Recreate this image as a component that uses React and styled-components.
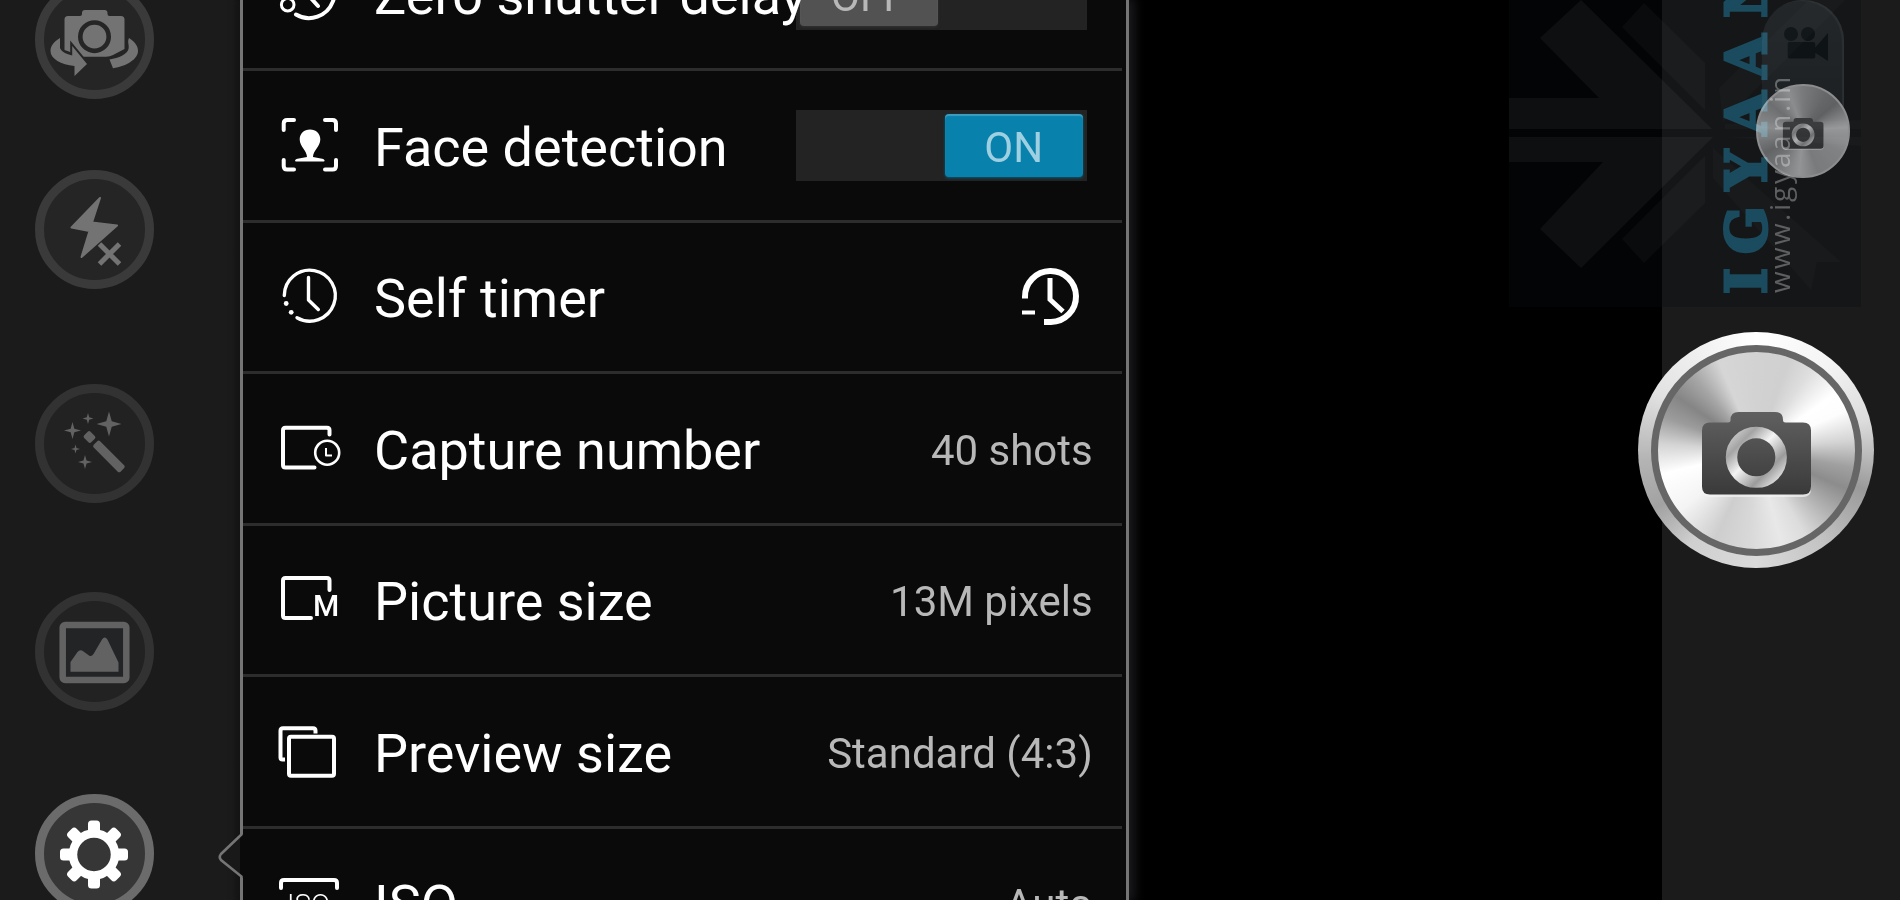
import { useState } from 'react';
import styled, { createGlobalStyle } from 'styled-components';

const GlobalStyle = createGlobalStyle`
  * {
    box-sizing: border-box;
  }
  body {
    margin: 0;
    background: #000;
    overflow: hidden;
    font-family: Roboto, 'Liberation Sans', sans-serif;
  }
  button {
    border: 0;
    padding: 0;
    background: none;
    color: inherit;
    font: inherit;
    cursor: pointer;
  }
`;

const Screen = styled.main`
  position: relative;
  display: grid;
  grid-template-columns: 240px minmax(0, 5fr) minmax(0, 3fr) 238px;
  grid-template-rows: 100vh;
  overflow: hidden;
  color: #fff;
`;

// left side

const Sidebar = styled.nav`
  display: grid;
  grid-template-rows: 190px 214px 208px 202px 119px;
  justify-items: start;
  margin-top: -20px;
  padding-left: 35px;
  background: linear-gradient(to right, #1b1b1b 232px, #121212 240px);
`;

const tones = {
  normal: { ring: '#3a3a3a', fill: '#252525', ink: '#737373' },
  dim: { ring: '#323232', fill: '#222', ink: '#626262' },
  active: { ring: '#6b6b6b', fill: '#363636', ink: '#fff' },
};

const RoundButton = styled.button`
  width: 119px;
  height: 119px;
  border-radius: 50%;
  border: 9px solid ${({ $tone }) => tones[$tone].ring};
  background: ${({ $tone }) => tones[$tone].fill};
  color: ${({ $tone }) => tones[$tone].ink};

  svg {
    display: block;
    width: 119px;
    height: 119px;
    margin: -9px;
  }
`;

// settings panel

const Panel = styled.section`
  position: relative;
  min-width: 0;
  background: #0a0a0a;
  border-left: 3px solid #757575;
  border-right: 3px solid #757575;
  box-shadow: 4px 0 10px 2px #1a1a1e;
`;

const Notch = styled.svg`
  position: absolute;
  top: 832px;
  left: -25px;
  width: 28px;
  height: 48px;
`;

const List = styled.ul`
  display: grid;
  grid-auto-rows: 151px 152px;
  list-style: none;
  margin: -80px 4px 0 0;
  padding: 0;
`;

const Item = styled.li`
  display: grid;
  border-bottom: 3px solid #2d2d2d;
`;

const Row = styled.label`
  display: flex;
  align-items: center;
  min-width: 0;
  padding: 0 29px 0 35px;
  text-align: left;
  cursor: pointer;
`;

const RowIcon = styled.svg`
  flex: none;
  width: 64px;
  height: 64px;
  margin-right: 32px;
  overflow: visible;
  fill: none;
  stroke: #fff;
  stroke-width: 4;
  stroke-linecap: round;
  stroke-linejoin: round;

  .solid,
  text {
    fill: #fff;
    stroke: none;
  }
`;

const Label = styled.span`
  position: relative;
  z-index: 1;
  flex: 1;
  min-width: 0;
  padding-top: 4px;
  font-size: 54px;
  line-height: 64px;
  white-space: nowrap;
`;

const Value = styled.span`
  padding-top: 4px;
  color: #b8b8b8;
  font-size: 42px;
  line-height: 50px;
  white-space: nowrap;
`;

const TimerValue = styled.svg`
  width: 72px;
  height: 64px;
  fill: none;
  stroke: #fff;
`;

const Track = styled.span`
  position: relative;
  flex: none;
  display: flex;
  justify-content: ${({ $on }) => ($on ? 'flex-end' : 'flex-start')};
  width: 291px;
  height: 71px;
  margin-right: 6px;
  padding: 4px;
  background: #232323;

  input {
    position: absolute;
    inset: 0;
    width: 100%;
    height: 100%;
    margin: 0;
    opacity: 0;
    cursor: pointer;
  }
`;

const Thumb = styled.span`
  width: 138px;
  height: 63px;
  padding-top: 4px;
  border-radius: 4px;
  background: ${({ $on }) => ($on ? '#0882ad' : '#525252')};
  box-shadow: inset 0 2px 1px rgba(255, 255, 255, 0.22), 0 1px 3px ${({ $on }) => ($on ? '#075a78' : '#333')};
  color: ${({ $on }) => ($on ? '#9fd0e2' : '#b8b8b8')};
  font-size: 42px;
  line-height: 60px;
  text-align: center;
`;

// right side

const CaptureBar = styled.aside`
  grid-column: 4;
  display: flex;
  flex-direction: column;
  align-items: flex-start;
  background: #1b1b1b;
`;

const ModeSwitch = styled.button`
  flex: none;
  display: flex;
  flex-direction: column;
  align-items: center;
  justify-content: space-between;
  width: 94px;
  height: 178px;
  margin-left: 94px;
`;

const ModePill = styled.span`
  display: flex;
  justify-content: center;
  width: 82px;
  height: 131px;
  border-radius: 41px 41px 0 0;
  background: linear-gradient(#303335, #26282a);
  box-shadow: inset -2px 1px 1px #3c3f41;
`;

const VideoIcon = styled.svg`
  width: 48px;
  height: 38px;
  margin: 25px 0 0 4px;
  fill: #121618;
`;

const ModeKnob = styled.span`
  flex: none;
  width: 94px;
  height: 94px;
  margin-top: -47px;
  border-radius: 50%;
  border: 2px solid #c4c4c4;
  background: conic-gradient(#a8a8a8, #8c8c8c 35deg, #858585 50deg, #d2d2d2 85deg, #b4b4b4 120deg, #aaa 160deg, #cecece 185deg, #a4a4a4 215deg, #8a8a8a 240deg, #c0c0c0 275deg, #999 310deg, #c4c4c4 340deg, #a8a8a8);

  svg {
    display: block;
    width: 94px;
    height: 94px;
    margin: -2px;
  }
`;

const Shutter = styled.button`
  flex: none;
  display: grid;
  place-items: center;
  width: 236px;
  height: 236px;
  margin: 154px 0 0 -24px;
  border-radius: 50%;
  background: conic-gradient(#fff, #f4f4f4 40deg, #dcdcdc 75deg, #9a9a9a 110deg, #c4c4c4 145deg, #dadada 180deg, #cfcfcf 215deg, #a2a2a2 240deg, #b4b4b4 265deg, #e2e2e2 300deg, #fff);
`;

const ShutterFace = styled.span`
  width: 211px;
  height: 211px;
  border-radius: 50%;
  border: 7px solid #666;
  background: conic-gradient(#d2d2d2, #d0d0d0 20deg, #dedede 34deg, #fff 54deg, #fdfdfd 66deg, #d4d4d4 84deg, #a0a0a0 100deg, #8c8c8c 113deg, #b4b4b4 132deg, #dcdcdc 150deg, #e8e8e8 165deg, #d8d8d8 185deg, #cecece 205deg, #f4f4f4 232deg, #fff 256deg, #d4d4d4 274deg, #9c9c9c 290deg, #858585 304deg, #a6a6a6 320deg, #d6d6d6 337deg, #d2d2d2);
  background-origin: border-box;

  svg {
    display: block;
    width: 236px;
    height: 236px;
    margin: -20px;
  }
`;

const Watermark = styled.svg`
  position: absolute;
  top: 0;
  right: 39px;
  width: 352px;
  height: 307px;
  pointer-events: none;
  mix-blend-mode: screen;
`;

const WatermarkShade = styled.div`
  position: absolute;
  top: 0;
  right: 39px;
  width: 352px;
  height: 307px;
  background: rgba(8, 13, 18, 0.3);
  pointer-events: none;
`;

const star = (x, y, r) => {
  const k = r * 0.22;
  return `M${x} ${y - r}L${x + k} ${y - k}L${x + r} ${y}L${x + k} ${y + k}L${x} ${y + r}L${x - k} ${y + k}L${x - r} ${y}L${x - k} ${y - k}Z`;
};

const SwitchCameraIcon = () => (
  <svg viewBox="0 0 119 119" fill="currentColor" aria-hidden="true">
    <path d="M33 36H45q2 0 2-2v-1q0-3 3-3h19.500q3 0 3 3v1q0 2 2 2H86q3.500 0 3.500 3.500V69L78 75q-3 1.700-7 1.700H48L38 68v5l-8.500-3V39.500Q29.500 36 33 36z" />
    <circle cx="59.500" cy="56.700" r="14.200" fill="none" stroke="#252525" strokeWidth="4.600" />
    <g stroke="#252525" strokeWidth="4" paintOrder="stroke">
      <path d="M25 58C18.500 62 15.500 66 15.500 71C15.500 79 26 84.500 39.500 86V96L52 84L37.200 66V75.500C30 74 26 71 25 68z" />
      <path d="M94 58C100 62 103 66 103 71C103 79 92 86 78 88.300L74.500 79.500C84 78 92 74.500 93.500 69C94.500 65 92 62 94 58z" />
    </g>
  </svg>
);

const FlashOffIcon = () => (
  <svg viewBox="0 0 119 119" aria-hidden="true">
    <path
      d="M65 28L36.500 57.500L54.500 61L46.500 87L82 55.500L57 52.500z"
      fill="currentColor"
      stroke="currentColor"
      strokeWidth="2"
      strokeLinejoin="round"
    />
    <path d="M64.500 74l20 20M84.500 74l-20 20" stroke="#252525" strokeWidth="9" />
    <path d="M64.500 74l20 20M84.500 74l-20 20" stroke="currentColor" strokeWidth="5" />
  </svg>
);

const WandIcon = () => (
  <svg viewBox="0 0 119 119" fill="currentColor" aria-hidden="true">
    <path d={[star(74, 40, 12.500), star(37.500, 46.500, 8.500), star(53, 34.500, 5.500), star(40.500, 65, 4.500), star(50, 78, 7)].join('')} />
    <rect x="-5" y="-4.500" width="10" height="9" rx="2" transform="translate(54.500 53) rotate(45)" />
    <rect x="0" y="-4.500" width="38" height="9" rx="2" transform="translate(60.500 59) rotate(45)" />
  </svg>
);

const GalleryIcon = () => (
  <svg viewBox="0 0 119 119" aria-hidden="true">
    <rect x="27.700" y="33" width="63.600" height="55" rx="2.500" fill="#232426" stroke="currentColor" strokeWidth="6.500" />
    <path d="M35.500 79.700V70L42.500 60Q45 57 48.500 59.500L54 63.500Q56.500 65 58.500 62L67 47.500Q69.700 43.500 72.400 47.500L83.500 70.500V79.700z" fill="currentColor" />
  </svg>
);

const GearIcon = () => (
  <svg viewBox="0 0 119 119" fill="currentColor" aria-hidden="true">
    <g transform="translate(59 60.500)">
      <circle r="21" fill="none" stroke="currentColor" strokeWidth="8.500" />
      {[0, 45, 90, 135, 180, 225, 270, 315].map((a) => (
        <rect key={a} x="-6" y="-34" width="12" height="13" rx="3.500" transform={`rotate(${a})`} />
      ))}
    </g>
  </svg>
);

const CameraGlyph = ({ id, dark, light }) => (
  <>
    <defs>
      <linearGradient id={`${id}Body`} x1="0" y1="0" x2="0" y2="1">
        <stop offset="0" stopColor={light} />
        <stop offset="1" stopColor={dark} />
      </linearGradient>
      <linearGradient id={`${id}Lens`} x1="0" y1="0" x2="1" y2="1">
        <stop offset="0" stopColor="#cfcfcf" />
        <stop offset="0.200" stopColor="#a4a4a4" />
        <stop offset="0.450" stopColor="#f4f4f4" />
        <stop offset="0.750" stopColor="#9b9b9b" />
        <stop offset="1" stopColor="#ededed" />
      </linearGradient>
    </defs>
    <path
      d="M72 91.500H90q2.500 0 2.500-2.500q0-8 8-8h36.500q8 0 8 8q0 2.500 2.500 2.500H165q8 0 8 8V155.500q0 8-8 8H72q-8 0-8-8V99.500q0-8 8-8z"
      fill="#f4f4f4"
      opacity="0.700"
      transform="translate(0 1.500)"
    />
    <path d="M72 90.500H90q2.500 0 2.500-2.500q0-8 8-8h36.500q8 0 8 8q0 2.500 2.500 2.500H165q8 0 8 8V154.500q0 8-8 8H72q-8 0-8-8V98.500q0-8 8-8z" fill={`url(#${id}Body)`} />
    <circle cx="118.300" cy="125.300" r="24.800" fill="none" stroke={`url(#${id}Lens)`} strokeWidth="11.500" />
  </>
);

const ZeroDelayIcon = () => (
  <RowIcon viewBox="0 0 64 64" aria-hidden="true">
    <path d="M5.500 30A25.500 25.500 0 1 1 18 52.500M31 14V34L40 44" />
    <circle cx="9.700" cy="42.700" r="6.300" strokeWidth="3" />
  </RowIcon>
);

const FaceIcon = () => (
  <RowIcon viewBox="0 0 64 64" aria-hidden="true">
    <path d="M5.700 16V9.500q0-3.500 3.500-3.500H16M47 6h7.500q3.500 0 3.500 3.500V16M58 46v6q0 3.500-3.500 3.500H47M16 55.500H9.200q-3.500 0-3.500-3.500V46" />
    <path className="solid" d="M32 15.500C26 15.500 21.700 19.500 21.700 25.500C21.700 32.500 29 36.500 29 43L19.500 44.700C16.500 45.500 16.500 47.500 18.500 47.500H45.200C47.200 47.500 47.200 45.500 44.200 44.700L35 43C35 36.500 42.300 32.500 42.300 25.500C42.300 19.500 38 15.500 32 15.500z" />
  </RowIcon>
);

const TimerIcon = () => (
  <RowIcon viewBox="0 0 64 64" aria-hidden="true">
    <path strokeWidth="3.400" d="M6.300 30.500A25.500 25.500 0 1 1 19 52.700M30.500 12.500V35L40.300 44.500" />
    <circle className="solid" cx="8.200" cy="38.500" r="2.400" />
    <circle className="solid" cx="13.200" cy="47.300" r="2.400" />
  </RowIcon>
);

const ShotsIcon = () => (
  <RowIcon viewBox="0 0 64 64" aria-hidden="true">
    <path d="M51.500 17.500V13.200q0-2.500-2.500-2.500H7.500Q5 10.700 5 13.200V48q0 2.500 2.500 2.500H36.500" />
    <circle cx="49.200" cy="35.700" r="12" strokeWidth="2.600" />
    <path strokeWidth="2" strokeLinecap="butt" d="M48 31v7.500h6" />
  </RowIcon>
);

const PictureSizeIcon = () => (
  <RowIcon viewBox="0 0 64 64" aria-hidden="true">
    <path d="M51.500 22V12.500Q51.500 10 49 10H7.500Q5 10 5 12.500V47.500Q5 50 7.500 50H33" />
    <text x="35" y="48" fontSize="30" fontWeight="500">M</text>
  </RowIcon>
);

const PreviewSizeIcon = () => (
  <RowIcon viewBox="0 0 64 64" aria-hidden="true">
    <path strokeLinecap="butt" d="M7 39.500H4.500q-2 0-2-2V10.700q0-2.500 2.500-2.500H35q2.500 0 2.500 2.500V13.500" />
    <rect x="11" y="16.800" width="45" height="39" rx="2" />
  </RowIcon>
);

const IsoIcon = () => (
  <RowIcon viewBox="0 0 64 64" aria-hidden="true">
    <path d="M3 17V12Q3 9 6 9H56Q59 9 59 12V17M3 50V55Q3 58 6 58H56Q59 58 59 55V50" />
    <text x="9" y="43" fontSize="28" fontWeight="300">ISO</text>
  </RowIcon>
);

const Toggle = ({ label, icon, initial }) => {
  const [on, setOn] = useState(initial);
  return (
    <Item>
      <Row>
        {icon}
        <Label>{label}</Label>
        <Track $on={on}>
          <Thumb $on={on}>{on ? 'ON' : 'OFF'}</Thumb>
          <input type="checkbox" role="switch" aria-label={label} checked={on} onChange={() => setOn(!on)} />
        </Track>
      </Row>
    </Item>
  );
};

const Setting = ({ label, icon, children }) => (
  <Item>
    <Row as="button" type="button">
      {icon}
      <Label>{label}</Label>
      {children}
    </Row>
  </Item>
);

export default function App() {
  return (
    <>
      <GlobalStyle />
      <Screen>
        <Sidebar>
          <RoundButton $tone="normal" aria-label="Switch camera"><SwitchCameraIcon /></RoundButton>
          <RoundButton $tone="normal" aria-label="Flash off"><FlashOffIcon /></RoundButton>
          <RoundButton $tone="dim" aria-label="Effects"><WandIcon /></RoundButton>
          <RoundButton $tone="dim" aria-label="Gallery"><GalleryIcon /></RoundButton>
          <RoundButton $tone="active" aria-label="Settings"><GearIcon /></RoundButton>
        </Sidebar>

        <Panel>
          <List>
            <Toggle label="Zero shutter delay" icon={<ZeroDelayIcon />} initial={false} />
            <Toggle label="Face detection" icon={<FaceIcon />} initial />
            <Setting label="Self timer" icon={<TimerIcon />}>
              <TimerValue viewBox="0 0 72 64" role="img" aria-label="Off">
                <path strokeWidth="6" d="M4 33.500V32A25.500 25.500 0 1 1 30 57H23" />
                <path strokeWidth="5" d="M29 13V34.500L42 46.500" />
                <path strokeWidth="4" d="M1 47.500H14" />
              </TimerValue>
            </Setting>
            <Setting label="Capture number" icon={<ShotsIcon />}><Value>40 shots</Value></Setting>
            <Setting label="Picture size" icon={<PictureSizeIcon />}><Value>13M pixels</Value></Setting>
            <Setting label="Preview size" icon={<PreviewSizeIcon />}><Value>Standard (4:3)</Value></Setting>
            <Setting label="ISO" icon={<IsoIcon />}><Value>Auto</Value></Setting>
          </List>
          <Notch viewBox="0 0 28 48" aria-hidden="true">
            <path d="M28 2H23.500V3L4 22Q1.500 25 4 28L23.500 45V46H28z" fill="#0a0a0a" />
            <path d="M22 3L4 22Q1.500 25 4 28L22 45z" fill="#191919" />
            <path d="M23.500 0V2.500L3 22Q0.500 25 3 28L23.500 44.500V48" fill="none" stroke="#757575" strokeWidth="2.600" />
          </Notch>
        </Panel>

        <CaptureBar>
          <ModeSwitch aria-label="Switch to video">
            <ModePill>
              <VideoIcon viewBox="0 0 48 38" aria-hidden="true">
                <circle cx="10" cy="9" r="7" />
                <circle cx="27" cy="9" r="7" />
                <rect x="6.700" y="17" width="27.600" height="16.500" rx="2" />
                <path d="M33 24L47 8V36L33 27z" />
              </VideoIcon>
            </ModePill>
            <ModeKnob>
              <svg viewBox="-8 -11 252 252" aria-hidden="true">
                <CameraGlyph id="mode" dark="#3e3e3e" light="#505050" />
              </svg>
            </ModeKnob>
          </ModeSwitch>
          <Shutter aria-label="Take picture">
            <ShutterFace>
              <svg viewBox="0 0 236 236" aria-hidden="true">
                <CameraGlyph id="shutter" dark="#3a3a3a" light="#606060" />
              </svg>
            </ShutterFace>
          </Shutter>
        </CaptureBar>

        <WatermarkShade />
        <Watermark viewBox="0 0 352 307">
          <g fill="#0b0b0b">
            <path d="M0 98H90L31 38L72 0L203 129H0z" />
            <path d="M0 137H204L72 268L31 229L94 162H0z" />
            <path fill="#070707" d="M113 27L135 3L196 63V110z" />
            <path fill="#070707" d="M113 239L135 263L196 203V156z" />
          </g>
          <g fill="#040404">
            <path d="M210 88L300 0H336L214 122z" />
            <path d="M204 148L332 262H308L302 290L204 178z" />
            <path d="M216 124L352 120V129H216zM216 137H352V146z" />
          </g>
          <text
            transform="translate(257 293) rotate(-90)"
            x="-1 39 103 158 215 275"
            fill="#083a4e"
            stroke="#083a4e"
            strokeWidth="3"
            fontFamily="'DejaVu Serif', serif"
            fontSize="56"
            fontWeight="700"
          >
            IGYAAN
          </text>
          <text
            transform="translate(281 293) rotate(-90)"
            x="0 24 48 72 82 91 109 125 142 161 181 190 199"
            fill="#505050"
            fontFamily="'Open Sans', sans-serif"
            fontSize="28"
          >
            www.igyaan.in
          </text>
        </Watermark>
      </Screen>
    </>
  );
}
